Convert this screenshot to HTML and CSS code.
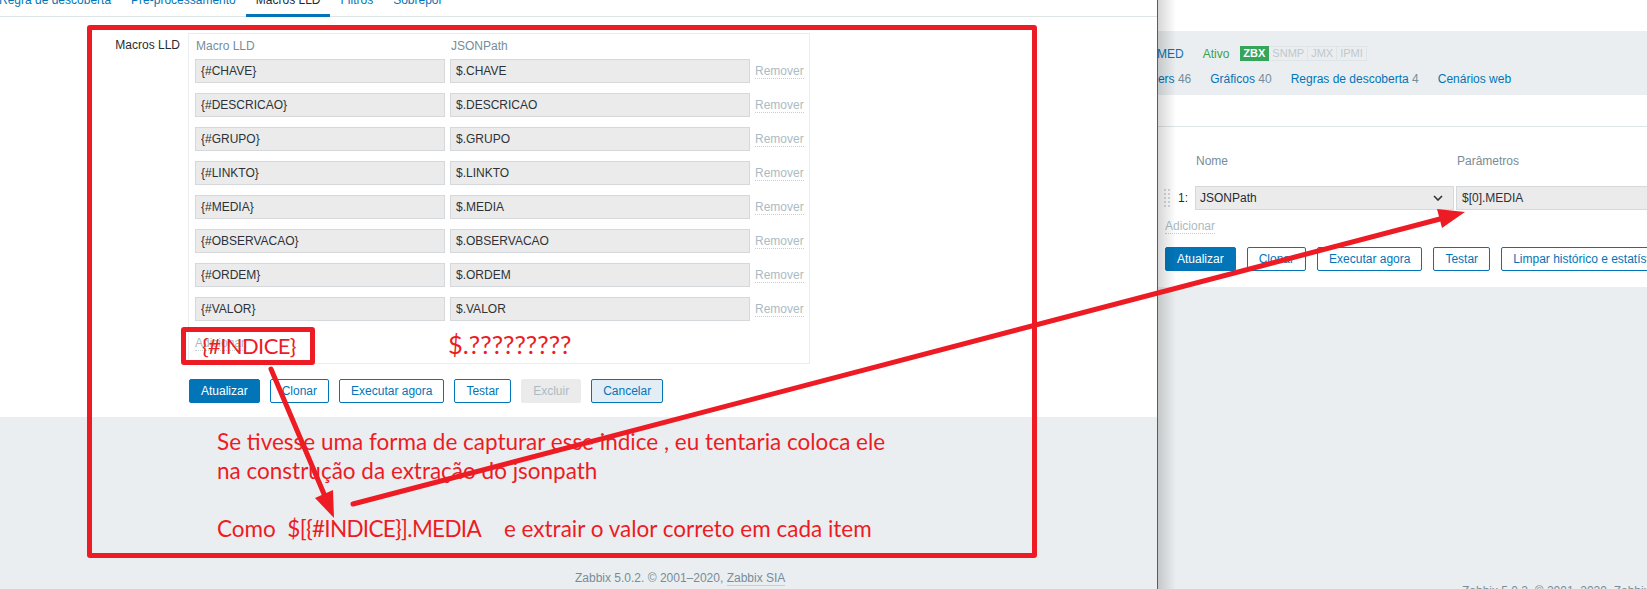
FILE: index.html
```html
<!DOCTYPE html>
<html lang="pt-BR">
<head>
  <meta charset="UTF-8" />
  <meta name="viewport" content="width=device-width, initial-scale=1.0" />
  <title>Macros LLD - Zabbix</title>
  <link rel="stylesheet" href="styles.css">
</head>
<body>
  <div class="screen">

    <!-- janela da regra de descoberta -->
    <div class="popup">
      <ul class="tabs">
        <li>Regra de descoberta</li>
        <li>Pré-processamento</li>
        <li class="active">Macros LLD</li>
        <li>Filtros</li>
        <li>Sobrepor</li>
      </ul>

      <div class="form">
        <div class="form-label">Macros LLD</div>
        <div class="macro-table">
          <div class="th">Macro LLD</div>
          <div class="th">JSONPath</div>
          <div class="th"></div>

          <div class="cell"><input class="field" value="{#CHAVE}" readonly></div>
          <div class="cell"><input class="field" value="$.CHAVE" readonly></div>
          <div class="cell"><span class="link-off">Remover</span></div>

          <div class="cell"><input class="field" value="{#DESCRICAO}" readonly></div>
          <div class="cell"><input class="field" value="$.DESCRICAO" readonly></div>
          <div class="cell"><span class="link-off">Remover</span></div>

          <div class="cell"><input class="field" value="{#GRUPO}" readonly></div>
          <div class="cell"><input class="field" value="$.GRUPO" readonly></div>
          <div class="cell"><span class="link-off">Remover</span></div>

          <div class="cell"><input class="field" value="{#LINKTO}" readonly></div>
          <div class="cell"><input class="field" value="$.LINKTO" readonly></div>
          <div class="cell"><span class="link-off">Remover</span></div>

          <div class="cell"><input class="field" value="{#MEDIA}" readonly></div>
          <div class="cell"><input class="field" value="$.MEDIA" readonly></div>
          <div class="cell"><span class="link-off">Remover</span></div>

          <div class="cell"><input class="field" value="{#OBSERVACAO}" readonly></div>
          <div class="cell"><input class="field" value="$.OBSERVACAO" readonly></div>
          <div class="cell"><span class="link-off">Remover</span></div>

          <div class="cell"><input class="field" value="{#ORDEM}" readonly></div>
          <div class="cell"><input class="field" value="$.ORDEM" readonly></div>
          <div class="cell"><span class="link-off">Remover</span></div>

          <div class="cell"><input class="field" value="{#VALOR}" readonly></div>
          <div class="cell"><input class="field" value="$.VALOR" readonly></div>
          <div class="cell"><span class="link-off">Remover</span></div>

          <div class="add-row"><span class="link-off">Adicionar</span></div>
        </div>

        <div class="buttons">
          <button class="btn primary">Atualizar</button>
          <button class="btn">Clonar</button>
          <button class="btn">Executar agora</button>
          <button class="btn">Testar</button>
          <button class="btn disabled">Excluir</button>
          <button class="btn soft">Cancelar</button>
        </div>
      </div>

      <div class="popup-bottom">
        <p class="note">Se tivesse uma forma de capturar esse indice , eu tentaria coloca ele<br>na construção da extração do jsonpath<br><br>Como&nbsp; <span class="note-code">$[{#INDICE}].MEDIA</span>&nbsp;&nbsp;&nbsp; e extrair o valor correto em cada item</p>
        <div class="footer">Zabbix 5.0.2. © 2001–2020, <span class="footer-link">Zabbix SIA</span></div>
      </div>
    </div>

    <!-- página do host por trás -->
    <div class="host">
      <div class="host-top"></div>
      <div class="host-header">
        <div class="host-line">
          <span class="host-name">MED</span>
          <span class="host-status">Ativo</span>
          <span class="badges">
            <span class="badge on">ZBX</span><span class="badge">SNMP</span><span class="badge">JMX</span><span class="badge">IPMI</span>
          </span>
        </div>
        <div class="host-line links">
          <span class="first">Triggers <em>46</em></span>
          <span>Gráficos <em>40</em></span>
          <span>Regras de descoberta <em>4</em></span>
          <span>Cenários web</span>
        </div>
      </div>
      <div class="host-tabs"></div>

      <div class="host-form">
        <div class="steps">
          <div></div>
          <div class="th">Nome</div>
          <div class="th">Parâmetros</div>

          <div class="step-num">
            <svg class="drag" width="8" height="20" viewBox="0 0 8 20">
              <g fill="#d5dade">
                <rect x="1" y="1" width="2" height="2"/><rect x="5" y="1" width="2" height="2"/>
                <rect x="1" y="5" width="2" height="2"/><rect x="5" y="5" width="2" height="2"/>
                <rect x="1" y="9" width="2" height="2"/><rect x="5" y="9" width="2" height="2"/>
                <rect x="1" y="13" width="2" height="2"/><rect x="5" y="13" width="2" height="2"/>
                <rect x="1" y="17" width="2" height="2"/><rect x="5" y="17" width="2" height="2"/>
              </g>
            </svg>
            <span>1:</span>
          </div>
          <div class="select">
            <span>JSONPath</span>
            <svg width="10" height="6" viewBox="0 0 10 6"><path d="M1 1l4 4 4-4" fill="none" stroke="#333" stroke-width="1.6"/></svg>
          </div>
          <div><input class="field" value="$[0].MEDIA" readonly></div>
        </div>
        <div class="host-add"><span class="link-off">Adicionar</span></div>
        <div class="buttons host-buttons">
          <button class="btn primary">Atualizar</button>
          <button class="btn">Clonar</button>
          <button class="btn">Executar agora</button>
          <button class="btn">Testar</button>
          <button class="btn">Limpar histórico e estatísticas</button>
        </div>
      </div>

      <div class="host-bottom">
        <div class="footer">Zabbix 5.0.2. © 2001–2020, <span class="footer-link">Zabbix SIA</span></div>
      </div>
    </div>

    <!-- marcações em vermelho -->
    <div class="mark-frame"></div>
    <div class="mark-box">{#INDICE}</div>
    <div class="mark-text">$.?????????</div>
    <svg class="arrows" width="1647" height="589" viewBox="0 0 1647 589">
      <g stroke="#ed1c24" stroke-width="5" stroke-linecap="round" fill="none">
        <line x1="271" y1="369" x2="324" y2="494"/>
        <line x1="353" y1="504" x2="1440" y2="219"/>
      </g>
      <g fill="#ed1c24">
        <polygon points="334,518 333,490 315,498"/>
        <polygon points="1465,212 1442,228 1437,209"/>
      </g>
    </svg>
  </div>
</body>
</html>
```

FILE: styles.css
```css
:root {
  --blue: #0275b8;
  --text: #1f2c33;
  --muted: #768d99;
  --off: #acbbc2;
  --line: #dfe4e7;
  --gray-bg: #ebeef0;
  --field: #ebebeb;
  --red: #ed1c24;
}

* {
  box-sizing: border-box;
}

body {
  margin: 0;
  font-family: "Liberation Sans", Arial, sans-serif;
  font-size: 12px;
  color: var(--text);
  background: #fff;
}

.screen {
  position: relative;
  width: 1647px;
  height: 589px;
  display: flex;
  overflow: hidden;
}

/* popup */

.popup {
  width: 1158px;
  flex: none;
  display: flex;
  flex-direction: column;
  border-right: 1px solid #5c5c5c;
  background: #fff;
}

.tabs {
  display: flex;
  list-style: none;
  margin: 0;
  padding: 0;
  height: 17px;
  border-bottom: 1px solid var(--line);
}

.tabs li {
  height: 24px;
  margin-top: -7px;
  padding: 0 10px;
  line-height: 14px;
  color: var(--blue);
  white-space: nowrap;
}

.tabs li:first-child {
  margin-left: -11px;
}

.tabs li.active {
  color: var(--text);
  border-bottom: 3px solid var(--blue);
}

.form {
  display: grid;
  grid-template-columns: 180px max-content;
  column-gap: 8px;
  row-gap: 15px;
  padding: 16px 0 14px;
}

.form-label {
  text-align: right;
  padding-top: 5px;
  line-height: 14px;
}

.macro-table {
  display: grid;
  grid-template-columns: 250px 300px auto;
  column-gap: 5px;
  padding: 4px 5px 13px 6px;
  border: 1px solid var(--gray-bg);
}

.th {
  color: var(--muted);
  line-height: 16px;
  padding-left: 1px;
}

.cell {
  padding: 5px 0;
  display: flex;
  align-items: center;
}

.field {
  width: 100%;
  height: 24px;
  padding: 0 5px;
  border: 1px solid #d5d9db;
  background: var(--field);
  color: #2b3338;
  font: inherit;
  outline: none;
}

.link-off {
  color: var(--off);
  line-height: 14px;
  border-bottom: 1px dotted #c4ced3;
  white-space: nowrap;
}

.add-row {
  grid-column: 1 / -1;
  padding-top: 10px;
  line-height: 14px;
}

.buttons {
  grid-column: 2;
  display: flex;
  gap: 10px;
  margin-left: 1px;
}

.btn {
  height: 24px;
  padding: 0 11px;
  border: 1px solid var(--blue);
  border-radius: 2px;
  background: #fff;
  color: var(--blue);
  font: inherit;
  white-space: nowrap;
  flex: none;
}

.btn.primary {
  background: var(--blue);
  color: #fff;
}

.btn.disabled {
  background: var(--field);
  border-color: var(--field);
  color: var(--off);
}

.btn.soft {
  background: #e2edf5;
}

.popup-bottom {
  flex: 1;
  display: flex;
  flex-direction: column;
  background: var(--gray-bg);
  padding-bottom: 4px;
}

.note {
  margin: 0;
  padding: 10px 0 0 217px;
  font-family: Lato, "Open Sans", sans-serif;
  font-size: 22.5px;
  line-height: 29px;
  color: var(--red);
  white-space: nowrap;
}

.note-code {
  letter-spacing: -0.7px;
}

.footer {
  margin-top: auto;
  padding-left: 575px;
  line-height: 14px;
  color: var(--muted);
  white-space: nowrap;
}

.footer-link {
  border-bottom: 1px solid #c6d0d5;
}

/* host por trás */

.host {
  flex: 1;
  position: relative;
  display: flex;
  flex-direction: column;
  overflow: hidden;
  background: #fff;
}

.host > * {
  flex-shrink: 0;
}

.host::before {
  content: "";
  position: absolute;
  left: 0;
  top: 0;
  bottom: 0;
  width: 18px;
  background: linear-gradient(to right, rgba(0, 0, 0, 0.16), rgba(0, 0, 0, 0));
  z-index: 2;
}

.host-top {
  height: 31px;
}

.host-header {
  height: 64px;
  padding-top: 15px;
  background: var(--gray-bg);
}

.host-line {
  display: flex;
  align-items: center;
  line-height: 14px;
  white-space: nowrap;
}

.host-name {
  margin-left: -1px;
  color: var(--blue);
}

.host-status {
  margin-left: 19px;
  color: #429e47;
}

.badges {
  display: flex;
  margin-left: 11px;
}

.badge {
  padding: 0 3px;
  line-height: 13px;
  font-size: 11px;
  color: #bfc8cd;
  border: 1px solid var(--line);
  border-left: none;
}

.badge.on {
  background: #34a55a;
  border-color: #34a55a;
  color: #fff;
  font-weight: bold;
}

.links {
  margin-top: 11px;
  gap: 19px;
}

.links span {
  color: var(--blue);
}

.links em {
  font-style: normal;
  color: var(--muted);
}

.links .first {
  margin-left: -27px;
}

.host-tabs {
  height: 32px;
  border-bottom: 1px solid var(--line);
}

.host-form {
  padding: 26px 0 16px 7px;
}

.steps {
  display: grid;
  grid-template-columns: 30px 259px 300px;
  column-gap: 2px;
  row-gap: 17px;
  margin-left: -2px;
}

.step-num {
  display: flex;
  align-items: center;
  justify-content: space-between;
  padding-right: 5px;
}

.select {
  height: 24px;
  display: flex;
  align-items: center;
  justify-content: space-between;
  padding: 0 10px 0 4px;
  border: 1px solid #d5d9db;
  background: var(--field);
}

.host-add {
  margin-top: 9px;
  line-height: 14px;
}

.host-buttons {
  margin: 14px 0 0;
  gap: 11px;
}

.host-bottom {
  flex: 1 0 auto;
  background: var(--gray-bg);
  padding: 297px 0 0 304px;
}

.host-bottom .footer {
  padding-left: 0;
}

/* marcações */

.mark-frame {
  position: absolute;
  left: 87px;
  top: 25px;
  width: 950px;
  height: 533px;
  border: 5px solid var(--red);
  border-radius: 3px;
  z-index: 5;
}

.mark-box {
  position: absolute;
  left: 181px;
  top: 327px;
  width: 134px;
  height: 38px;
  padding-left: 16px;
  border: 5px solid var(--red);
  border-radius: 3px;
  font-family: Lato, "Open Sans", sans-serif;
  font-size: 22px;
  letter-spacing: -0.6px;
  line-height: 28px;
  color: var(--red);
  z-index: 5;
}

.mark-text {
  position: absolute;
  left: 448px;
  top: 330px;
  font-family: Lato, "Open Sans", sans-serif;
  font-size: 25.5px;
  line-height: 28px;
  color: var(--red);
  z-index: 5;
}

.arrows {
  position: absolute;
  left: 0;
  top: 0;
  z-index: 6;
  pointer-events: none;
}
```
